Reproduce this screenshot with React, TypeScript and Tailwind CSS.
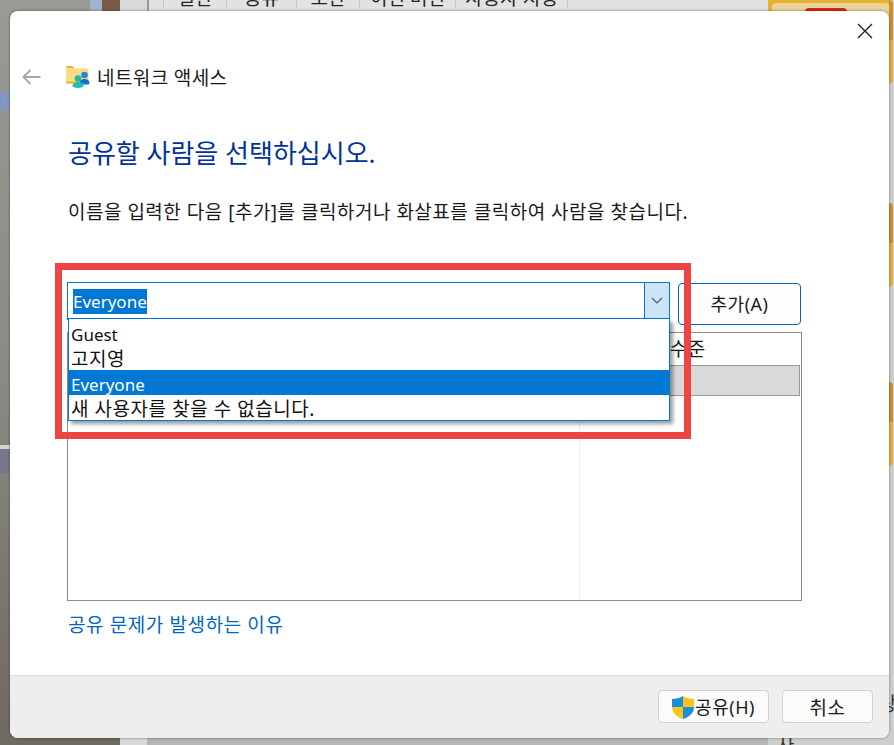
import React from "react";

const font = { fontFamily: "'Noto Sans', 'Noto Sans CJK KR', sans-serif" };

function FolderIcon() {
  return (
    <svg width="24" height="22" viewBox="0 0 24 22">
      <path d="M0 1.500C0 .7.7 0 1.500 0h5l2.500 2.500h-9z" fill="#f2b52a" />
      <path d="M0 2.500h21c.8 0 1.500.7 1.500 1.500v12c0 .8-.7 1.500-1.500 1.500H1.500C.7 17.500 0 16.800 0 16z" fill="#fbdc82" />
      <path d="M0 16v-.5h22.500v.5c0 .8-.7 1.500-1.500 1.500H1.500C.7 17.500 0 16.800 0 16z" fill="#f0b429" />
      <circle cx="18.500" cy="9" r="3.300" fill="#1e88d8" />
      <path d="M13.500 17c0-2.500 2-4 5-4s5 1.500 5 4c0 .8-.8 1.500-1.500 1.500h-7c-.8 0-1.500-.7-1.500-1.500z" fill="#1573c4" />
      <circle cx="12" cy="12.500" r="3.300" fill="#22b8a8" />
      <path d="M6.500 19.500c0-2.200 2.200-3.500 5.500-3.500s5.500 1.300 5.500 3.500c0 1.400-2 2.500-5.500 2.500s-5.500-1.100-5.500-2.500z" fill="#1cc0b0" />
    </svg>
  );
}

function ShieldIcon() {
  return (
    <svg width="22" height="23" viewBox="0 0 22 23">
      <path d="M11 0C8 2 4 3 0 3v8h11z" fill="#1b8ddd" />
      <path d="M11 0c3 2 7 3 11 3v8H11z" fill="#fcc419" />
      <path d="M0 11c0 6 5 10 11 12V11z" fill="#fcc419" />
      <path d="M22 11c0 6-5 10-11 12V11z" fill="#1b8ddd" />
    </svg>
  );
}

function GoldTab({ top }: { top: string }) {
  return (
    <div className={`absolute left-[889px] flex h-[84px] w-[4px] flex-col overflow-hidden rounded-r ${top}`}>
      <div className="h-[40px] bg-[#c8922a]" />
      <div className="flex-1 bg-[#e0b040]" />
    </div>
  );
}

function Backdrop() {
  return (
    <>
      <div className="absolute inset-0 bg-[#c4c4c4]" />
      <div className="absolute left-0 top-0 h-full w-[120px] bg-gradient-to-b from-[#9a9a96] via-[#8b8a84] to-[#6f6a60]" />
      <div className="absolute left-0 top-[93px] h-[17px] w-[10px] bg-[#8396c4]" />
      <div className="absolute left-0 top-[445px] h-[28px] w-[10px] bg-[#77788c]" />
      <div className="absolute left-0 top-[445px] h-[4px] w-[10px] bg-[#d8d4cc]" />
      <div className="absolute left-[90px] top-0 h-[11px] w-[30px] bg-[#7a5a48]" />
      <div className="absolute left-[90px] top-0 h-[11px] w-[12px] bg-[#9fb4d0]" />
      <div className="absolute left-[120px] top-0 h-full w-[27px] bg-[#dadada]" />
      <div className="absolute left-[147px] top-0 h-full w-[621px] border-l-2 border-[#9a9a9a] bg-[#e2e2e2]" />
      <div className="absolute left-[163px] top-[-12px] flex h-[20px] border-l border-[#c8c8c8] text-[19px] leading-[20px] text-[#222]" style={font}>
        <span className="w-[63px] border-r border-[#c8c8c8] text-center">일반</span>
        <span className="w-[70px] border-r border-[#c8c8c8] text-center">공유</span>
        <span className="w-[63px] border-r border-[#c8c8c8] text-center">보안</span>
        <span className="w-[96px] border-r border-[#c8c8c8] text-center">이전 버전</span>
        <span className="w-[112px] border-r border-[#c8c8c8] text-center">사용자 지정</span>
      </div>
      <div className="absolute left-[147px] top-[738px] h-[7px] w-[621px] bg-[#b6b6b6]" />
      <div className="absolute left-[768px] top-0 h-full w-[126px] bg-[#cfcfcf]" />
      <div className="absolute left-[768px] top-0 h-[84px] w-[121px] rounded-bl-lg bg-[#e8b030]" />
      <div className="absolute left-[772px] top-[3px] h-[40px] w-[117px] rounded-t bg-[#e8d49a]" />
      <div className="absolute left-[805px] top-[8px] h-[4px] w-[42px] rounded-t bg-[#d8261c]" />
      <GoldTab top="top-0" />
      <GoldTab top="top-[203px]" />
      <GoldTab top="top-[382px]" />
      <span className="absolute left-[879px] top-[692px] text-[19px] leading-[24px] text-[#333]" style={font}>상</span>
      <span className="absolute left-[777px] top-[733px] text-[19px] leading-[24px] text-[#333]" style={font}>사</span>
    </>
  );
}

export default function App() {
  return (
    <div className="relative h-[745px] w-[894px] overflow-hidden" style={font}>
      <Backdrop />
      <div className="absolute left-[10px] top-[11px] flex h-[727px] w-[879px] flex-col overflow-hidden rounded-lg bg-white shadow-[0_0_3px_rgba(0,0,0,0.45)]">
        <div className="flex h-10 shrink-0 items-center justify-end pr-4">
          <svg width="16" height="16" viewBox="0 0 16 16" stroke="#1a1a1a" strokeWidth="1.300">
            <path d="M1 1l14 14M15 1L1 15" />
          </svg>
        </div>

        <div className="mt-[6px] flex h-10 shrink-0 items-center pl-[12px]">
          <svg width="19" height="16" viewBox="0 0 19 16" fill="none" stroke="#a6a6a6" strokeWidth="1.800">
            <path d="M18.500 8H1.500M8.500 1L1.500 8l7 7" />
          </svg>
          <div className="ml-[25px]">
            <FolderIcon />
          </div>
          <span className="ml-[7px] pt-[2px] text-[19px] leading-[24px] tracking-[0.4px] text-[#1a1a1a]">네트워크 액세스</span>
        </div>

        <h1 className="ml-[58px] mt-[36px] flex h-10 shrink-0 items-center text-[26px] font-normal text-[#003399]">공유할 사람을 선택하십시오.</h1>

        <p className="ml-[58px] mt-[27px] flex h-6 shrink-0 items-center text-[19px] tracking-[0.5px] text-[#1a1a1a]">이름을 입력한 다음 [추가]를 클릭하거나 화살표를 클릭하여 사람을 찾습니다.</p>

        <div className="relative ml-[57px] mt-[58px] w-[735px] shrink-0">
          <div className="flex h-[43px] items-start justify-between">
            <div className="flex h-[38px] w-[603px] border border-b-2 border-[#0078d4] bg-white">
              <div className="flex flex-1 items-center pl-[5px] pt-px">
                <span className="bg-[#0078d4] text-[17px] leading-[25px] text-white">Everyone</span>
              </div>
              <div className="flex w-[25px] items-center justify-center border-l border-[#0078d4] bg-[#cce4f7]">
                <svg width="12" height="7" viewBox="0 0 12 7" fill="none" stroke="#4f5b66" strokeWidth="1.200">
                  <path d="M1 1l5 5 5-5" />
                </svg>
              </div>
            </div>
            <button className="mr-px mt-px h-[42px] w-[123px] rounded border border-[#0067c0] bg-[#fdfdfd] text-[18px] tracking-[0.5px] text-[#1a1a1a]">추가(A)</button>
          </div>

          <div className="mt-[7px] h-[269px] border border-[#8c8c8c]">
            <div className="flex h-[32px]">
              <div className="w-[511px] border-r border-[#eeeeee]" />
              <div className="flex flex-1 items-center pl-[8px] text-[19px] tracking-[0.5px] text-[#1a1a1a]">사용 권한 수준</div>
            </div>
            <div className="mr-px h-[31px] border border-[#9a9a9a] bg-[#d9d9d9]" />
            <div className="ml-[511px] h-[204px] border-l border-[#eeeeee]" />
          </div>

          <div className="absolute left-px top-[37px] w-[602px] border-x border-b border-[#0078d4] bg-white text-[17px] leading-[24px] text-[#111] shadow-[3px_3px_4px_rgba(0,0,0,0.4)]">
            <div className="h-[26px] pl-[2px] pt-[4px]">Guest</div>
            <div className="h-[25px] pl-[2px] pt-[2px] text-[19px] tracking-[0.5px]">고지영</div>
            <div className="h-[25px] bg-[#0078d4] pl-[2px] pt-[3px] text-white">Everyone</div>
            <div className="h-[25px] pl-[2px] pt-[2px] text-[19px] tracking-[0.55px]">새 사용자를 찾을 수 없습니다.</div>
          </div>
        </div>

        <a className="ml-[58px] mt-[11px] flex h-6 shrink-0 items-center pt-[3px] text-[19px] tracking-[0.6px] text-[#0067c0]">공유 문제가 발생하는 이유</a>

        <div className="mt-auto flex h-[63px] shrink-0 items-start justify-end gap-[13px] border-t border-[#dfdfdf] bg-[#eeeeee] pr-4 pt-[14px]">
          <button className="flex h-[33px] w-[111px] items-center justify-center gap-px rounded border border-[#d0d0d0] bg-[#fbfbfb] pt-px text-[18px] tracking-[0.5px] text-[#1a1a1a]">
            <ShieldIcon />
            공유(H)
          </button>
          <button className="h-[33px] w-[91px] rounded border border-[#d0d0d0] bg-[#fbfbfb] pt-[3px] text-[19px] tracking-[0.5px] text-[#1a1a1a]">취소</button>
        </div>
      </div>

      <div className="pointer-events-none absolute left-[55px] top-[263px] h-[176px] w-[636px] border-[7px] border-[#ef4444]" />
    </div>
  );
}
